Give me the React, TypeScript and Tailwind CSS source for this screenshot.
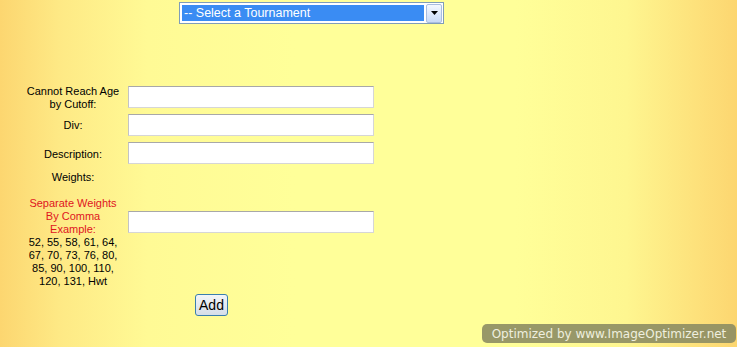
import React from "react";

function Label({ children, red }: { children: React.ReactNode; red?: boolean }) {
  return (
    <div className={`w-[100px] text-center text-[11px] leading-[13px] ${red ? "text-[#e0141e]" : "text-black"}`}>
      {children}
    </div>
  );
}

function TextInput() {
  return (
    <div className="h-[22px] w-[246px] bg-white border border-[#d6d6d6] border-t-[#a8a8a8] border-l-[#c4c4c4]" />
  );
}

export default function App() {
  return (
    <div
      className="relative min-h-[347px] w-full overflow-hidden bg-[linear-gradient(to_right,#fcd670_0%,#fee985_8%,#fffa95_20%,#ffff99_40%,#ffff99_70%,#fef690_85%,#fde07a_95%,#fcd670_100%)]"
      style={{ fontFamily: '"Liberation Sans", Arial, sans-serif' }}
    >
      {/* Tournament select */}
      <div className="pt-[2px] pl-[179px]">
        <div className="flex h-[22px] w-[265px] items-center border border-[#7f9db9] bg-white pl-[2px] pr-[1px]">
          <div className="flex h-[16px] flex-1 items-center bg-[#3a8cf3] pl-[2px] text-[12.5px] leading-none text-white">
            -- Select a Tournament
          </div>
          <div className="ml-[2px] flex h-[19px] w-[16px] items-center justify-center rounded-[2px] border border-[#a9bde0] bg-[linear-gradient(to_bottom,#f4f8ff,#c9daf7)]">
            <svg width="7" height="4" viewBox="0 0 7 4">
              <path d="M0 0H7L3.5 4Z" fill="#000" />
            </svg>
          </div>
        </div>
      </div>

      {/* Form */}
      <div className="mt-[60px] flex flex-col pl-[23px]">
        <div className="flex h-[26px] items-center gap-[5px]">
          <Label>
            <span className="relative top-[1px]">
              Cannot Reach Age
              <br />
              by Cutoff:
            </span>
          </Label>
          <TextInput />
        </div>
        <div className="mt-[4px] flex h-[22px] items-center gap-[5px]">
          <Label>Div:</Label>
          <TextInput />
        </div>
        <div className="mt-[6px] flex h-[22px] items-center gap-[5px]">
          <Label>
            <span className="relative top-[1px]">Description:</span>
          </Label>
          <TextInput />
        </div>
        <div className="mt-[7px] flex h-[13px] items-center">
          <Label>Weights:</Label>
        </div>
        <div className="mt-[13px] flex items-start gap-[5px]">
          <div className="w-[100px] text-center text-[11px] leading-[13px]">
            <div className="text-[#e0141e]">
              Separate Weights
              <br />
              By Comma
              <br />
              Example:
            </div>
            <div className="text-black">
              52, 55, 58, 61, 64,
              <br />
              67, 70, 73, 76, 80,
              <br />
              85, 90, 100, 110,
              <br />
              120, 131, Hwt
            </div>
          </div>
          <div className="mt-[14px]">
            <TextInput />
          </div>
        </div>
        <div className="mt-[6px] pl-[172px]">
          <button className="flex h-[22px] w-[33px] items-center justify-center rounded-[3px] border border-[#3a7fae] bg-[linear-gradient(to_bottom,#f3f5f8,#d6dee8)] text-[14px] leading-none text-black">
            Add
          </button>
        </div>
      </div>

      {/* Watermark */}
      <div
        className="absolute left-[482px] top-[324px] flex h-[19px] w-[254px] items-center justify-center rounded-[5px] bg-[#8d8d63]/90 text-[12px] leading-none text-[#efefdf]"
        style={{ fontFamily: '"DejaVu Sans", Verdana, sans-serif' }}
      >
        Optimized by www.ImageOptimizer.net
      </div>
    </div>
  );
}
